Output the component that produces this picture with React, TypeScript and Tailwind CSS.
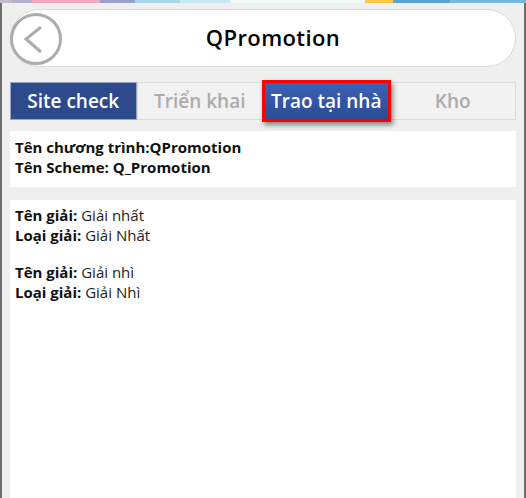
const strip = [
  { w: 'w-[12px]', bg: 'bg-[#c4bccc]' },
  { w: 'w-[20px]', bg: 'bg-[#b6aecb]' },
  { w: 'w-[68px]', bg: 'bg-[#f0a9c1]' },
  { w: 'w-[35px]', bg: 'bg-[#99a1c8]' },
  { w: 'w-[45px]', bg: 'bg-[#a9d9e9]' },
  { w: 'w-[50px]', bg: 'bg-[#c9e9f1]' },
  { w: 'w-[135px]', bg: 'bg-[#f1f8f8]' },
  { w: 'w-[28px]', bg: 'bg-[#f8c84a]' },
  { w: 'w-[57px]', bg: 'bg-[#5aa1d1]' },
  { w: 'flex-1', bg: 'bg-[#79b6da]' },
];

const prizes = [
  { name: 'Giải nhất', type: 'Giải Nhất' },
  { name: 'Giải nhì', type: 'Giải Nhì' },
];

export default function App() {
  return (
    <div
      className="h-[498px] w-[526px] overflow-hidden bg-[#efefef] flex flex-col"
      style={{ fontFamily: '"Open Sans", "Noto Sans", sans-serif' }}
    >
      {/* top colour strip from the page behind */}
      <div className="flex h-[3px] shrink-0">
        {strip.map((s, i) => (
          <div key={i} className={`${s.w} ${s.bg}`} />
        ))}
      </div>

      <div className="flex-1 flex flex-col border-l-2 border-r-2 border-[#6e6e6e] px-[8px] pt-[6px] min-h-0">
        {/* Header pill */}
        <div className="relative h-[58px] shrink-0 rounded-full bg-white border border-[#d9d9d9] flex items-center justify-center">
          <div className="absolute left-[-1px] top-[3px] w-[52px] h-[52px] rounded-full border-[3px] border-[#acacac]">
            <svg width="46" height="46" viewBox="0 0 46 46" className="block">
              <polyline
                points="28,11 13,23 28,36"
                fill="none"
                stroke="#acacac"
                strokeWidth="3"
                strokeLinecap="butt"
                strokeLinejoin="miter"
              />
            </svg>
          </div>
          <span className="ml-[20px] text-[22px] font-semibold tracking-[0.4px] text-black leading-none -mt-[2px]">
            QPromotion
          </span>
        </div>

        {/* Tabs */}
        <div className="grid grid-cols-4 h-[38px] mt-[15px] shrink-0">
          <div className="bg-[#2c4a8c] border border-[#9aa5bd] flex items-center justify-center text-white text-[19px] font-semibold">
            Site check
          </div>
          <div className="bg-[#f2f2f2] border border-[#dcdcdc] flex items-center justify-center text-[#ababab] text-[19px] font-semibold">
            Triển khai
          </div>
          <div className="-my-[2px] -mx-[1px] z-10 border-[3px] border-[#ff0000] bg-gradient-to-b from-[#3b62b5] to-[#2c4c94] shadow-[2px_3px_5px_rgba(0,0,0,0.45)] flex items-center justify-center text-white text-[19px] font-semibold">
            Trao tại nhà
          </div>
          <div className="bg-[#f2f2f2] border border-[#dcdcdc] flex items-center justify-center text-[#ababab] text-[19px] font-semibold">
            Kho
          </div>
        </div>

        {/* Program info */}
        <div className="bg-white mt-[11px] h-[56px] shrink-0 px-[5px] pt-[6px] text-[15px] leading-[20px] font-bold text-[#111]">
          <div>Tên chương trình:QPromotion</div>
          <div>Tên Scheme: Q_Promotion</div>
        </div>

        {/* Prize list */}
        <div className="bg-white mt-[13px] flex-1 px-[5px] pt-[5px] text-[15px] leading-[20px] text-[#222] flex flex-col gap-[17px]">
          {prizes.map((p) => (
            <div key={p.name}>
              <div>
                <span className="font-bold text-[#111]">Tên giải:</span> {p.name}
              </div>
              <div>
                <span className="font-bold text-[#111]">Loại giải:</span> {p.type}
              </div>
            </div>
          ))}
        </div>
      </div>
    </div>
  );
}
